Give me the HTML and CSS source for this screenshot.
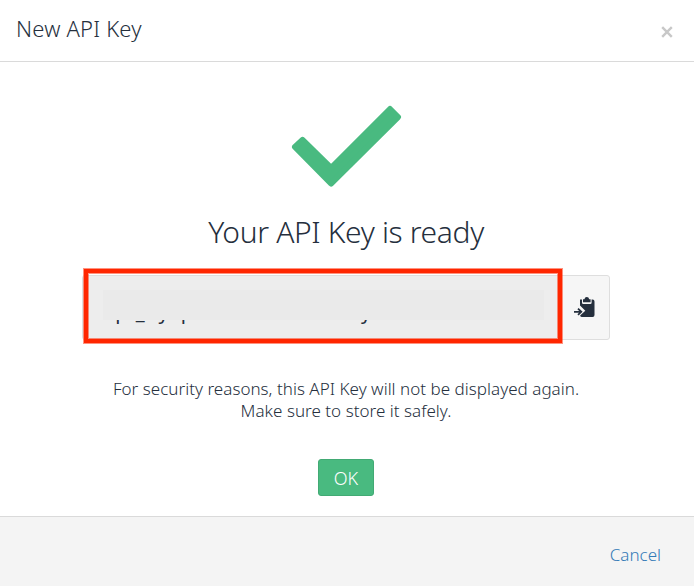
FILE: index.html
```html
<!DOCTYPE html>
<html lang="en">
  <head>
    <meta charset="UTF-8" />
    <meta name="viewport" content="width=device-width, initial-scale=1.0" />
    <title>New API Key</title>
    <link rel="stylesheet" href="styles.css">
  </head>
  <body>
    <div class="modal">
      <div class="modal-header">
        <h1>New API Key</h1>
        <button class="close" aria-label="Close">
          <svg width="12" height="12" viewBox="0 0 12 12">
            <path d="M1.2 1.2 10.8 10.8M10.8 1.2 1.2 10.8" />
          </svg>
        </button>
      </div>

      <div class="modal-body">
        <svg class="check" width="112" height="84" viewBox="0 0 112 84">
          <path d="M5 43 12.5 36 41 64 100 5 108 13 41 79.5Z" />
        </svg>
        <h2>Your API Key is ready</h2>

        <div class="key-group">
          <div class="key-value">
            <span class="key-text">api<span class="underscore">_</span><span class="key-y">y</span><span class="key-p">p</span><span class="key-end">y</span></span>
            <span class="key-mask"></span>
          </div>
          <button class="copy" aria-label="Copy">
            <svg width="22" height="24" viewBox="0 0 22 24">
              <path class="icon-fill" d="M6 4.5h2v3.2q0 1.3 1.3 1.3h7q1.3 0 1.3-1.3V4.5h1q1.9 0 1.9 1.9v13.7q0 1.9-1.9 1.9H8q-1.5 0-1.9-1.5l5.2-4.8L6 10.5Z" />
              <path class="icon-fill" d="M9 4.3h1.4q.4-2.3 2.4-2.3t2.4 2.3h1.4v3H9Z" />
              <path class="icon-arrow" d="M0 16.8h6M4 13.7l3.3 3.1L4 19.9" />
            </svg>
          </button>
          <div class="highlight"></div>
        </div>

        <p>For security reasons, this API Key will not be displayed again.<br />Make sure to store it safely.</p>
        <button class="ok">OK</button>
      </div>

      <div class="modal-footer">
        <a class="cancel">Cancel</a>
      </div>
    </div>
  </body>
</html>
```

FILE: styles.css
```css
* {
  box-sizing: border-box;
}

body {
  margin: 0;
  font-family: 'Noto Sans', 'Open Sans', sans-serif;
  font-weight: 350;
  color: #252f3d;
  background-color: #fff;
}

button {
  padding: 0;
  border: 0;
  background: none;
  font: inherit;
  color: inherit;
}

.modal {
  display: flex;
  flex-direction: column;
  height: 586px;
  overflow: hidden;
}

.modal-header {
  display: flex;
  justify-content: space-between;
  height: 62px;
  padding: 13px 21px 0 16px;
  border-bottom: 1px solid #dadada;
}

h1 {
  margin: 0;
  font-size: 22px;
  line-height: 30px;
  font-weight: inherit;
  letter-spacing: 0.2px;
}

.close {
  height: 12px;
  margin-top: 13px;
}

.close svg {
  display: block;
  fill: none;
  stroke: #c8c8c8;
  stroke-width: 2.4;
}

.modal-body {
  display: flex;
  flex: 1;
  flex-direction: column;
  align-items: center;
  padding: 42px 2px 0 0;
}

.check {
  display: block;
  fill: #49ba80;
  stroke: #49ba80;
  stroke-width: 6;
  stroke-linejoin: round;
}

h2 {
  margin: 24px 0 0;
  font-size: 30px;
  line-height: 40px;
  font-weight: inherit;
  letter-spacing: -0.35px;
}

.key-group {
  position: relative;
  display: flex;
  width: 528px;
  height: 65px;
  margin-top: 23px;
  border: 1px solid #dedede;
  border-radius: 3px;
  background-color: #f6f6f6;
}

.key-value {
  position: relative;
  width: 476px;
  padding: 22px 0 0 21px;
  background-color: #ededed;
}

.key-text {
  display: block;
  font-size: 20px;
  line-height: 27px;
  font-weight: 400;
  white-space: nowrap;
}

.key-mask {
  position: absolute;
  top: 14px;
  left: 20px;
  width: 441px;
  height: 30px;
  background-color: #eaeaea;
}

.underscore {
  margin-left: 3px;
}

.key-y {
  margin-left: 14px;
}

.key-p {
  margin-left: 12px;
}

.key-end {
  margin-left: 168px;
}

.copy {
  flex: 1;
  padding: 0 0 2px 2px;
}

.copy svg {
  display: block;
  margin: 0 auto;
}

.icon-fill {
  fill: #252f3d;
}

.icon-arrow {
  fill: none;
  stroke: #252f3d;
  stroke-width: 1.8;
}

.highlight {
  position: absolute;
  top: -7px;
  left: 1px;
  width: 478px;
  height: 74px;
  border: 4px solid #ff2600;
  box-shadow: 0 0 0 1px rgba(255, 38, 0, 0.5), inset 0 0 0 1px rgba(255, 38, 0, 0.5);
}

p {
  margin: 38px 0 0;
  text-align: center;
  font-size: 17px;
  line-height: 22px;
  letter-spacing: 0.03px;
}

.ok {
  width: 56px;
  height: 37px;
  margin-top: 37px;
  padding-top: 1px;
  border: 1px solid #42aa74;
  border-radius: 3px;
  background-color: #49ba80;
  color: #fff;
  font-size: 18px;
  line-height: 34px;
}

.modal-footer {
  display: flex;
  justify-content: flex-end;
  height: 70px;
  padding: 26px 33px 0 0;
  border-top: 1px solid #dadada;
  background-color: #f4f4f4;
}

.cancel {
  font-size: 17px;
  line-height: 24px;
  color: #337ab7;
}
```
